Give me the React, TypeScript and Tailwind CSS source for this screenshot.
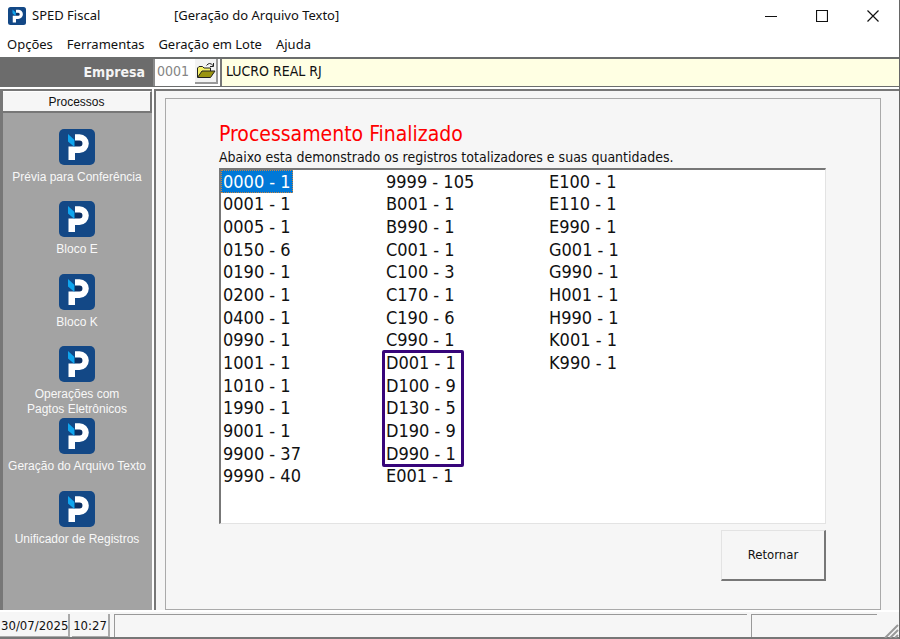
import clsx from 'clsx'

const menus = ['Opções', 'Ferramentas', 'Geração em Lote', 'Ajuda']

const processes = [
    'Prévia para Conferência',
    'Bloco E',
    'Bloco K',
    'Operações com\nPagtos Eletrônicos',
    'Geração do Arquivo Texto',
    'Unificador de Registros',
]

const columns = [
    ['0000 - 1', '0001 - 1', '0005 - 1', '0150 - 6', '0190 - 1', '0200 - 1', '0400 - 1', '0990 - 1', '1001 - 1', '1010 - 1', '1990 - 1', '9001 - 1', '9900 - 37', '9990 - 40'],
    ['9999 - 105', 'B001 - 1', 'B990 - 1', 'C001 - 1', 'C100 - 3', 'C170 - 1', 'C190 - 6', 'C990 - 1', 'D001 - 1', 'D100 - 9', 'D130 - 5', 'D190 - 9', 'D990 - 1', 'E001 - 1'],
    ['E100 - 1', 'E110 - 1', 'E990 - 1', 'G001 - 1', 'G990 - 1', 'H001 - 1', 'H990 - 1', 'K001 - 1', 'K990 - 1'],
]

const Logo = ({ className }: { className?: string }) => (
    <svg viewBox="0 0 36 36" className={className} aria-hidden="true">
        <rect width="36" height="36" rx="5" fill="#134886" />
        <path d="M15 11h8v7h-8z" fill="#0c2f62" />
        <path d="M16 5.300h4.500a9.300 9.300 0 0 1 0 18.600H16V31H9.500V17.500h11a3 3 0 0 0 0-6H16z" fill="#fff" />
        <path d="M9 5l6.500 6v7L9 12.500z" fill="#10a5ee" />
    </svg>
)

const FolderIcon = () => (
    <svg viewBox="0 0 20 17" className="h-[17px] w-5" aria-hidden="true">
        <path d="M1.500 15V6l1.500-1.500h3.500L8 6h6.500v3" fill="#f5f06a" stroke="#222" />
        <path d="M1.500 15.500L6 9h13l-4.500 6.500z" fill="#9a9410" stroke="#222" strokeLinejoin="round" />
        <path d="M10.500 3.500q3-4 6.500 0M17.500 1v3.500h-3.500" fill="none" stroke="#222" />
    </svg>
)

const TitleBar = () => (
    <header className="flex h-8 items-center pl-2 font-['Noto_Sans','Open_Sans',sans-serif] text-[13px]">
        <Logo className="h-[18px] w-[18px]" />
        <h1 className="ml-1.5 w-[142px]">SPED Fiscal</h1>
        <span>[Geração do Arquivo Texto]</span>
        <div className="ml-auto flex">
            <button aria-label="Minimizar" className="flex h-8 w-[51px] items-center justify-center">
                <svg viewBox="0 0 12 12" className="h-3 w-3"><path d="M0 6.500h12" stroke="#111" /></svg>
            </button>
            <button aria-label="Maximizar" className="flex h-8 w-[51px] items-center justify-center">
                <svg viewBox="0 0 12 12" className="h-3 w-3"><path d="M.5.5h11v11H.5z" fill="none" stroke="#111" strokeWidth="1.200" /></svg>
            </button>
            <button aria-label="Fechar" className="flex h-8 w-[52px] items-center justify-center">
                <svg viewBox="0 0 12 12" className="h-3 w-3"><path d="M.5.5l11 11M11.500.5l-11 11" stroke="#111" strokeWidth="1.200" /></svg>
            </button>
        </div>
    </header>
)

const CompanyBar = () => (
    <div className="flex h-[30px] border-t-2 border-b border-[#6b6d6d] bg-white">
        <label htmlFor="company" className="w-[153px] bg-[#6c6c6c] pr-2 text-right text-sm leading-[27px] font-bold text-[#f4f4f4]">
            Empresa
        </label>
        <input id="company" defaultValue="0001" className="w-[42px] border-l-2 border-[#8a8a8a] pb-1 pl-0.5 text-sm text-[#858585] outline-none" />
        <button aria-label="Abrir empresa" className="flex h-[25px] w-[23px] items-center justify-center border-r-2 border-b-2 border-[#999] bg-[#f3f3f3]">
            <FolderIcon />
        </button>
        <input aria-label="Nome da empresa" readOnly defaultValue="LUCRO REAL RJ" className="ml-0.5 min-w-0 flex-1 border-l-2 border-[#777] bg-[#ffffe3] pb-1 pl-1 text-sm outline-none" />
    </div>
)

const Sidebar = () => (
    <aside className="w-[152px] shrink-0 border-t-2 border-l-3 border-[#777] bg-[#a3a3a3] font-['Liberation_Sans',Arial,sans-serif] text-xs">
        <h2 className="h-[22px] border-t border-r-2 border-b-2 border-t-white border-r-[#777] border-b-[#777] bg-[#f6f6f6] text-center leading-[21px]">Processos</h2>
        <nav className="mt-4 flex h-[434px] flex-col pr-px">
            {processes.map((name) => (
                <button key={name} className="flex min-h-0 flex-1 flex-col items-center text-[#f8f8f8]">
                    <Logo className="h-9 w-9 shrink-0" />
                    <span className="mt-[5px] leading-[15px] whitespace-pre">{name}</span>
                </button>
            ))}
        </nav>
    </aside>
)

const RecordList = () => (
    <div role="listbox" aria-label="Registros totalizadores" className="flex h-[356px] border-t-2 border-l-2 border-r border-b border-t-[#777] border-l-[#777] border-r-[#e3e3e3] border-b-[#e3e3e3] bg-white text-lg">
        {columns.map((items, col) => (
            <div key={col} role="presentation" className="relative grid h-[317px] w-[163px] grid-rows-14">
                {items.map((item, row) => (
                    <div key={item} role="option" aria-selected={col === 0 && row === 0} className="flex items-center">
                        <span
                            className={clsx(
                                'pr-0.5 pl-0.5 leading-[23px] whitespace-pre',
                                col === 0 && row === 0 && 'bg-[#0078d7] text-white outline-1 -outline-offset-1 outline-dotted outline-[#c88543]',
                            )}
                        >
                            {item}
                        </span>
                    </div>
                ))}
                {col === 1 && <div className="absolute top-[180px] -left-0.5 h-[117px] w-[82px] rounded-xs border-3 border-[#37057a]" />}
            </div>
        ))}
    </div>
)

const StatusBar = () => (
    <footer className="flex h-[27px] gap-0.5 border-b-2 border-[#777] bg-[#f6f6f6] pt-0.5 text-[13px] leading-[23px]">
        <span className="w-[70px] border-r-2 border-b border-[#aaa] pl-px">30/07/2025</span>
        <span className="w-[38px] border-r-2 border-b border-[#aaa] text-center">10:27</span>
        <span className="ml-0.5 flex-1 border-t border-l border-[#999]" />
        <span className="ml-0.5 w-[126px] border-t border-l border-[#999]" />
        <svg viewBox="0 0 20 24" className="h-6 w-5" aria-hidden="true">
            <path d="M6 24L19 11M11 24l8-8M16 24l3-3" stroke="#999" strokeWidth="2" />
        </svg>
    </footer>
)

export default function App() {
    return (
        <div className="flex min-h-screen flex-col border-r border-[#666] bg-white font-['DejaVu_Sans_Condensed','DejaVu_Sans',sans-serif] text-[#111]">
            <TitleBar />
            <nav className="flex h-[25px] items-center gap-3.5 pl-[7px] font-['Noto_Sans','Open_Sans',sans-serif] text-[13px]">
                {menus.map((menu) => (
                    <button key={menu}>{menu}</button>
                ))}
            </nav>
            <CompanyBar />
            <div className="mt-0.5 mb-0.5 flex flex-1">
                <Sidebar />
                <main className="ml-0.5 flex flex-1 border-t-2 border-l-2 border-[#777] bg-[#f6f6f6] pt-[7px] pr-[18px] pl-[9px]">
                    <section className="flex-1 border border-[#aaa] pt-[23px] pr-[54px] pl-[53px]">
                        <h2 className="text-[21px] leading-6 text-[#ff0000]">Processamento Finalizado</h2>
                        <p className="text-sm leading-[22px]">Abaixo esta demonstrado os registros totalizadores e suas quantidades.</p>
                        <RecordList />
                        <div className="mt-1.5 flex justify-end">
                            <button className="h-[51px] w-[105px] border-t border-r-2 border-b-2 border-l border-t-[#e3e3e3] border-r-[#777] border-b-[#777] border-l-[#e3e3e3] text-[13px]">Retornar</button>
                        </div>
                    </section>
                </main>
            </div>
            <StatusBar />
        </div>
    )
}
